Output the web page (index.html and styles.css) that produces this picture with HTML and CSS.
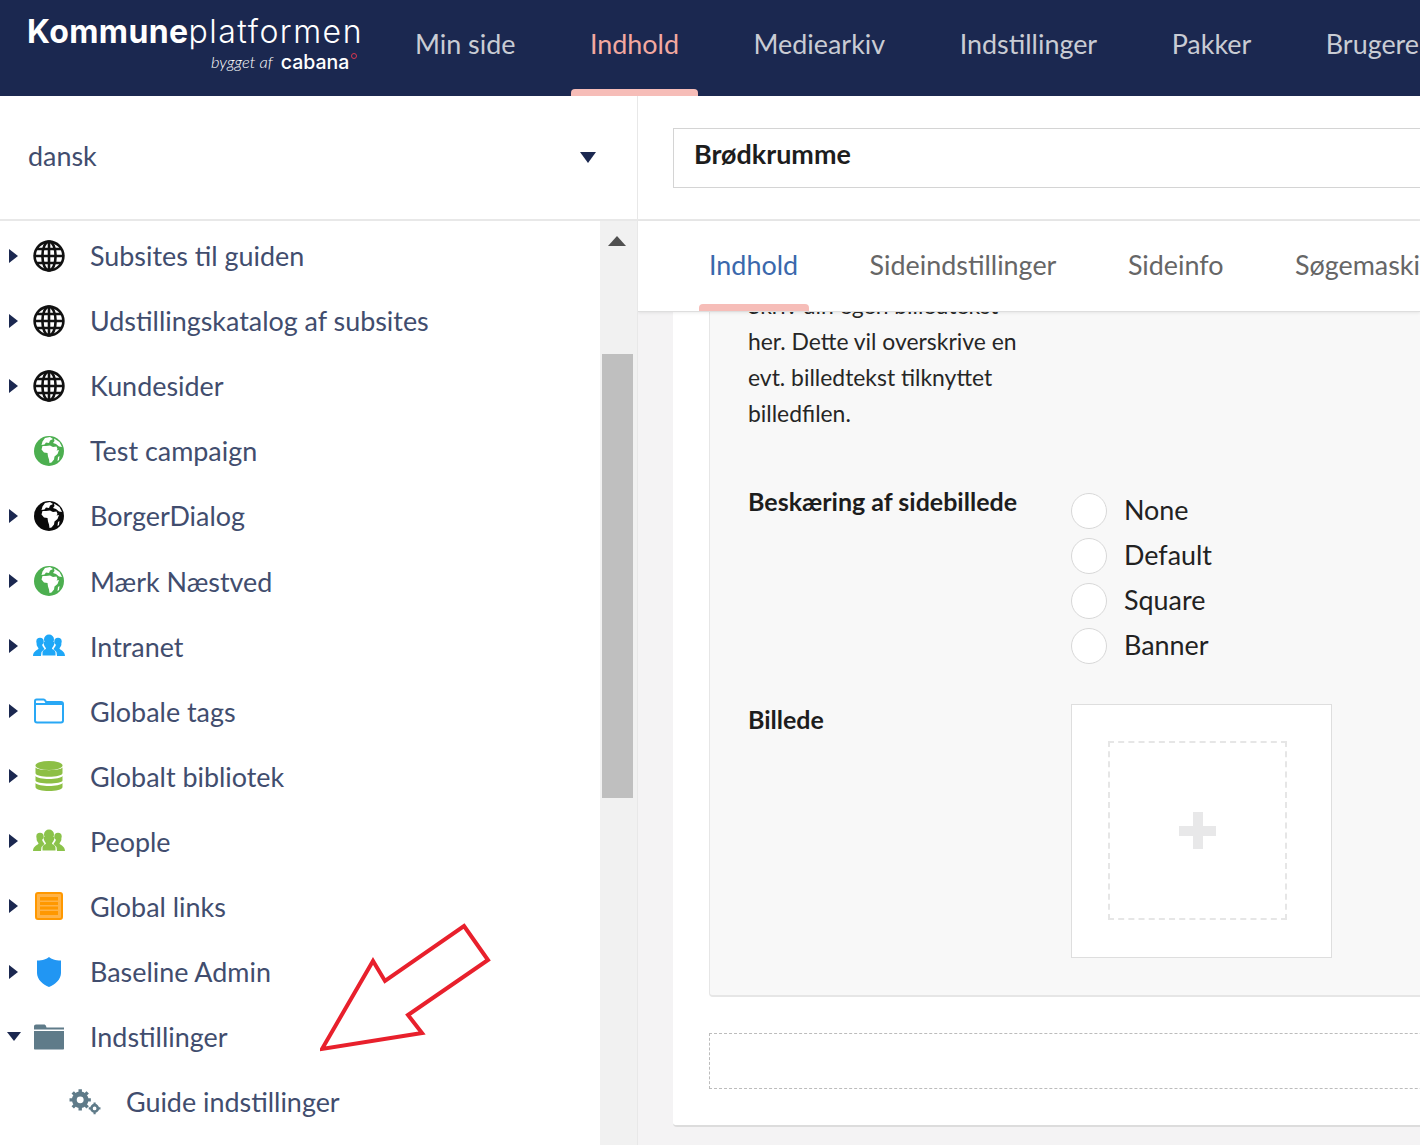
FILE: index.html
```html
<!DOCTYPE html>
<html lang="en">
<head>
    <meta charset="UTF-8">
    <title>Kommuneplatformen</title>
    <link rel="stylesheet" href="styles.css">
</head>
<body>
    <svg class="defs" width="0" height="0">
        <symbol id="i-grid" viewBox="0 0 32 32">
            <g fill="none" stroke="#111" stroke-width="2.600">
                <circle cx="16" cy="16" r="14.400"/>
                <ellipse cx="16" cy="16" rx="6.600" ry="14.400"/>
                <path d="M16 2v28M2 16h28M4 9h24M4 23h24"/>
            </g>
        </symbol>
        <symbol id="i-earth" viewBox="0 0 32 32">
            <circle cx="16" cy="16" r="15" fill="currentColor"/>
            <path fill="#fff" d="M13 11l4-.5 3 1.500 3.500-.5 1 2.500-1 1.500 2.500-.5-1.500 4-3 2.500-.5 3-2.500 3-2 .5-.5-3.500-1-3-.5-3.500-3.500-.5-2.500-3 1-3.500z"/>
            <path fill="#fff" d="M12 3l5-1 3 2-3 1.500-1 2.500-3-.5-1.500 2-3 .5 1-3.500zM21 3.500l5.500 3.500 2.500 5-3-.5-3-2.500-3-1 1.500-2zM25 22l1.500-1-.5 4-1.500 1z"/>
        </symbol>
        <symbol id="i-people" viewBox="0 -4 32 32">
            <g fill="currentColor">
                <circle cx="16" cy="5.500" r="5"/>
                <path d="M10.500 8c0 4 2.500 5.500 2.500 6.500s-3.500 1-3.500 4.500v2.500h13V19c0-3.500-3.500-3.500-3.500-4.500s2.500-2.500 2.500-6.500z"/>
                <circle cx="7" cy="7.500" r="3.700"/>
                <circle cx="25" cy="7.500" r="3.700"/>
                <path d="M3.500 9.500c0 3 2 4 2 5S0 17 0 22h8l.5-4 3-3-2-3-1-3zM28.500 9.500c0 3-2 4-2 5s5.500 2.500 5.500 7.500h-8l-.5-4-3-3 2-3 1-3z"/>
            </g>
        </symbol>
        <symbol id="i-folder-line" viewBox="-1 -3.500 32 32">
            <path fill="none" stroke="#29a8f5" stroke-width="2" stroke-linejoin="round" d="M1 5V2.500C1 1.500 1.500 1 2.500 1h7c1 0 1.500.5 2 1.500l.5 1h15c1 0 2 .5 2 2V22c0 1.200-.8 2-2 2H3c-1.200 0-2-.8-2-2zM1 5.500h28"/>
        </symbol>
        <symbol id="i-folder" viewBox="-1 -3.500 32 32">
            <path fill="#5f7b89" d="M0 5V2C0 .8.800 0 2 0h8c1 0 1.500.5 2 1.500l.5 1.500H30v2zM0 6.500h30V24c0 .6-.4 1-1 1H1c-.6 0-1-.4-1-1z"/>
        </symbol>
        <symbol id="i-db" viewBox="-2 -1 32 32">
            <g fill="#8dbf45">
                <ellipse cx="14" cy="4.500" rx="13.500" ry="4.500"/>
                <path d="M.5 6.500C3 10 25 10 27.500 6.500V12c0 5-27 5-27 0zM.5 15C3 19 25 19 27.500 15v4.500c0 4-27 4-27 0zM.5 22C3 26 25 26 27.500 22v4c0 5.300-27 5.300-27 0z"/>
            </g>
        </symbol>
        <symbol id="i-crate" viewBox="-2 -2 32 32">
            <rect x="1" y="1" width="26" height="26" rx="2" fill="#ffb347" stroke="#ff9800" stroke-width="2"/>
            <path fill="#ff9800" d="M5 5h18v3.500H5zM5 10h18v3H5zM5 14.500h18v3H5zM5 19h18v4H5z"/>
        </symbol>
        <symbol id="i-shield" viewBox="-4 -1 32 32">
            <path fill="#2196f3" d="M12 0c2.500 2 6 3.500 12 3.500V16c0 6.500-6 11.500-12 14C6 27.500 0 22.500 0 16V3.500C6 3.500 9.500 2 12 0z"/>
        </symbol>
        <symbol id="i-cogs" viewBox="0 0 30 24">
            <g fill="none" stroke="#5f7b89">
                <circle cx="10.500" cy="10" r="5.500" stroke-width="4.500"/>
                <path stroke-width="3.200" d="M10.500 0v4M10.500 16v4M.5 10h4M16.500 10h4M3.500 3l3 3M14.500 14l3 3M17.500 3l-3 3M6.500 14l-3 3"/>
                <circle cx="24" cy="18" r="3" stroke-width="2.500"/>
                <path stroke-width="2" d="M24 12.500v2M24 21.500v2M18.500 18h2M27.500 18h2"/>
            </g>
        </symbol>
    </svg>

    <header class="topbar">
        <div class="logo">
            <div class="logoName"><b>Kommune</b>platformen</div>
            <div class="logoBy"><i>bygget af</i><span>cabana</span><em></em></div>
        </div>
        <nav class="mainNav">
            <a>Min side</a>
            <a class="active">Indhold</a>
            <a>Mediearkiv</a>
            <a>Indstillinger</a>
            <a>Pakker</a>
            <a>Brugere</a>
        </nav>
    </header>

    <div class="app">
        <aside class="side">
            <div class="langRow">
                <span>dansk</span>
                <i class="caret"></i>
            </div>
            <div class="treeWrap">
                <ul class="tree">
                    <li><i class="arr"></i><svg class="ico"><use href="#i-grid"/></svg><span>Subsites til guiden</span></li>
                    <li><i class="arr"></i><svg class="ico"><use href="#i-grid"/></svg><span>Udstillingskatalog af subsites</span></li>
                    <li><i class="arr"></i><svg class="ico"><use href="#i-grid"/></svg><span>Kundesider</span></li>
                    <li><i class="arr none"></i><svg class="ico green"><use href="#i-earth"/></svg><span>Test campaign</span></li>
                    <li><i class="arr"></i><svg class="ico black"><use href="#i-earth"/></svg><span>BorgerDialog</span></li>
                    <li><i class="arr"></i><svg class="ico green"><use href="#i-earth"/></svg><span>Mærk Næstved</span></li>
                    <li><i class="arr"></i><svg class="ico blue"><use href="#i-people"/></svg><span>Intranet</span></li>
                    <li><i class="arr"></i><svg class="ico"><use href="#i-folder-line"/></svg><span>Globale tags</span></li>
                    <li><i class="arr"></i><svg class="ico"><use href="#i-db"/></svg><span>Globalt bibliotek</span></li>
                    <li><i class="arr"></i><svg class="ico lime"><use href="#i-people"/></svg><span>People</span></li>
                    <li><i class="arr"></i><svg class="ico"><use href="#i-crate"/></svg><span>Global links</span></li>
                    <li><i class="arr"></i><svg class="ico"><use href="#i-shield"/></svg><span>Baseline Admin</span></li>
                    <li><i class="arr open"></i><svg class="ico"><use href="#i-folder"/></svg><span>Indstillinger</span></li>
                    <li class="sub"><svg class="ico"><use href="#i-cogs"/></svg><span>Guide indstillinger</span></li>
                </ul>
                <div class="scroll">
                    <i class="scrollUp"></i>
                    <div class="thumb"></div>
                </div>
                <svg class="redArrow" width="180" height="140" viewBox="0 0 180 140">
                    <path d="M144 4L168 38 88 93 102 111 2 127 53 39 65 59z" fill="none" stroke="#e8202c" stroke-width="4"/>
                </svg>
            </div>
        </aside>

        <main class="content">
            <div class="crumbRow">
                <div class="crumb">Brødkrumme</div>
            </div>
            <div class="tabs">
                <a class="active">Indhold</a>
                <a>Sideindstillinger</a>
                <a>Sideinfo</a>
                <a>Søgemaskiner</a>
            </div>
            <div class="scrollArea">
                <div class="card">
                    <div class="panel">
                        <p class="help">Skriv din egen billedtekst her. Dette vil overskrive en evt. billedtekst tilknyttet billedfilen.</p>
                        <div class="field cropField">
                            <label>Beskæring af sidebillede</label>
                            <div class="radios">
                                <div class="radio"><i></i>None</div>
                                <div class="radio"><i></i>Default</div>
                                <div class="radio"><i></i>Square</div>
                                <div class="radio"><i></i>Banner</div>
                            </div>
                        </div>
                        <div class="field imageField">
                            <label>Billede</label>
                            <div class="imageBox">
                                <div class="imageDrop"><i class="plus"></i></div>
                            </div>
                        </div>
                    </div>
                    <div class="dropZone"></div>
                </div>
            </div>
        </main>
    </div>
</body>
</html>
```

FILE: styles.css
```css
html, body{
    margin: 0;
    height: 100%;
    overflow: hidden;
}
body{
    width: 1420px;
    height: 1145px;
    display: flex;
    flex-direction: column;
    font-family: "Lato", "Liberation Sans", sans-serif;
    font-size: 26.900px;
    color: #414d6e;
    background-color: #fff;
}
.defs{
    position: absolute;
}
a{
    white-space: nowrap;
}

/* top bar */
.topbar{
    height: 96px;
    flex: none;
    display: flex;
    background-color: #1b2850;
    overflow: hidden;
}
.logo{
    width: 415px;
    flex: none;
    box-sizing: border-box;
    padding: 13px 0 0 27px;
    color: #fff;
}
.logoName{
    font-family: "Inter", sans-serif;
    font-size: 32px;
    line-height: 38px;
    font-weight: 300;
    letter-spacing: 1.500px;
    white-space: nowrap;
}
.logoName b{
    font-weight: 700;
    letter-spacing: 0.400px;
}
.logoBy{
    display: flex;
    align-items: center;
    height: 24px;
    padding-left: 184px;
    margin-top: -1px;
}
.logoBy i{
    font-size: 16.500px;
    font-weight: 300;
    margin-right: 8px;
}
.logoBy span{
    font-family: "Inter", sans-serif;
    font-size: 19.500px;
    font-weight: 500;
}
.logoBy em{
    width: 4px;
    height: 4px;
    border: 1px solid #d9364f;
    border-radius: 50%;
    margin: -12px 0 0 2px;
}
.mainNav{
    display: flex;
    gap: 74.500px;
    padding-top: 26px;
}
.mainNav a{
    color: #c9ccd4;
    line-height: 36px;
    position: relative;
}
.mainNav a.active{
    color: #f3a9a0;
}
.mainNav a.active::after{
    content: "";
    position: absolute;
    left: -19px;
    right: -19px;
    top: 63px;
    height: 7px;
    background-color: #f6bdb8;
    border-radius: 4px 4px 0 0;
}

/* layout */
.app{
    flex: 1;
    display: flex;
    min-height: 0;
}
.side{
    width: 637px;
    flex: none;
    border-right: 1px solid #e8e8e8;
    display: flex;
    flex-direction: column;
}
.langRow{
    height: 125px;
    flex: none;
    box-sizing: border-box;
    border-bottom: 2px solid #e8e8e8;
    display: flex;
    align-items: center;
    justify-content: space-between;
    padding: 0 41px 4px 28px;
}
.caret{
    width: 0;
    height: 0;
    margin-top: 3px;
    border-left: 8.500px solid transparent;
    border-right: 8.500px solid transparent;
    border-top: 11px solid #1b2850;
}

/* tree */
.treeWrap{
    flex: 1;
    display: flex;
    position: relative;
    min-height: 0;
}
.tree{
    flex: 1;
    list-style: none;
    margin: 0;
    padding: 2px 0 0;
    overflow: hidden;
}
.tree li{
    height: 65.100px;
    display: flex;
    align-items: center;
    white-space: nowrap;
}
.arr{
    width: 0;
    height: 0;
    margin-left: 9px;
    margin-right: 15px;
    border-top: 7px solid transparent;
    border-bottom: 7px solid transparent;
    border-left: 9px solid #1b2850;
}
.arr.none{
    border-left-color: transparent;
}
.arr.open{
    margin-left: 7px;
    margin-right: 12px;
    border-left: 7px solid transparent;
    border-right: 7px solid transparent;
    border-top: 9px solid #1b2850;
    border-bottom: 0;
}
.ico{
    width: 32px;
    height: 32px;
    flex: none;
    margin-right: 25px;
}
.tree li.sub{
    padding-left: 69px;
}
.green{
    color: #4caf50;
}
.black{
    color: #0a0a0a;
}
.blue{
    color: #1ea7f7;
}
.lime{
    color: #8bc34a;
}
.scroll{
    width: 37px;
    flex: none;
    background-color: #f1f1f1;
    position: relative;
}
.scrollUp{
    position: absolute;
    left: 8px;
    top: 15px;
    width: 0;
    height: 0;
    border-left: 9px solid transparent;
    border-right: 9px solid transparent;
    border-bottom: 10px solid #505050;
}
.thumb{
    position: absolute;
    left: 2px;
    right: 4px;
    top: 133px;
    height: 444px;
    background-color: #bfbfbf;
}
.redArrow{
    position: absolute;
    left: 320px;
    top: 701px;
}

/* right part */
.content{
    flex: 1;
    min-width: 0;
    display: flex;
    flex-direction: column;
    overflow: hidden;
}
.crumbRow{
    height: 125px;
    flex: none;
    box-sizing: border-box;
    border-bottom: 2px solid #e8e8e8;
    padding: 32px 0 0 35px;
}
.crumb{
    height: 60px;
    box-sizing: border-box;
    width: 900px;
    border: 1.500px solid #d4d4d4;
    padding: 6px 0 0 20px;
    font-weight: 700;
    color: #1d1d1d;
    line-height: 38px;
}
.tabs{
    height: 91px;
    flex: none;
    box-sizing: border-box;
    display: flex;
    gap: 71.500px;
    padding: 26px 0 0 71px;
    border-bottom: 1px solid #dedede;
    box-shadow: 0 1px 3px rgba(0,0,0,0.08);
    position: relative;
    z-index: 1;
    background-color: #fff;
}
.tabs a{
    color: #666;
    line-height: 36px;
    position: relative;
}
.tabs a.active{
    color: #3a68ac;
}
.tabs a.active::after{
    content: "";
    position: absolute;
    left: -10px;
    right: -11px;
    top: 57px;
    height: 7px;
    background-color: #f6bdb8;
    border-radius: 4px 4px 0 0;
}
.scrollArea{
    flex: 1;
    min-height: 0;
    overflow: hidden;
    background-color: #f4f3f4;
    padding-left: 35px;
}
.card{
    width: 1000px;
    height: 815px;
    box-sizing: border-box;
    background-color: #fff;
    border-bottom: 2px solid #dcdcdc;
    border-radius: 0 0 4px 4px;
    padding-left: 36px;
}
.panel{
    height: 685px;
    box-sizing: border-box;
    background-color: #f8f8f8;
    border-left: 1px solid #e6e6e6;
    border-bottom: 2px solid #e6e6e6;
    border-radius: 0 0 0 4px;
    padding-left: 38px;
    overflow: hidden;
    color: #222;
}
.help{
    margin: -25px 0 0;
    width: 290px;
    font-size: 22.900px;
    line-height: 36px;
    color: #262626;
}
.field{
    display: flex;
}
.field label{
    width: 323px;
    flex: none;
    font-size: 25px;
    font-weight: 700;
    color: #1d1d1d;
    line-height: 36px;
}
.cropField{
    margin-top: 52px;
}
.radios{
    margin-top: 4px;
}
.radio{
    height: 45px;
    display: flex;
    align-items: center;
    gap: 17px;
}
.radio i{
    width: 36px;
    height: 36px;
    box-sizing: border-box;
    border: 1.500px solid #d8d8d8;
    border-radius: 50%;
    background-color: #fff;
    margin-top: 3px;
}
.imageField{
    margin-top: 34px;
}
.imageBox{
    width: 261px;
    height: 254px;
    box-sizing: border-box;
    margin-top: 3px;
    background-color: #fff;
    border: 1.500px solid #dedede;
    padding: 36px;
}
.imageDrop{
    width: 179px;
    height: 179px;
    box-sizing: border-box;
    border: 2px dashed #e6e6e6;
    display: flex;
    align-items: center;
    justify-content: center;
}
.plus{
    width: 37px;
    height: 37px;
    background:
        linear-gradient(#e8e8e9, #e8e8e9) center / 37px 10px no-repeat,
        linear-gradient(#e8e8e9, #e8e8e9) center / 10px 37px no-repeat;
}
.dropZone{
    height: 56px;
    box-sizing: border-box;
    margin-top: 36px;
    border: 1px dashed #bcbcbc;
    border-right: 0;
}
```
